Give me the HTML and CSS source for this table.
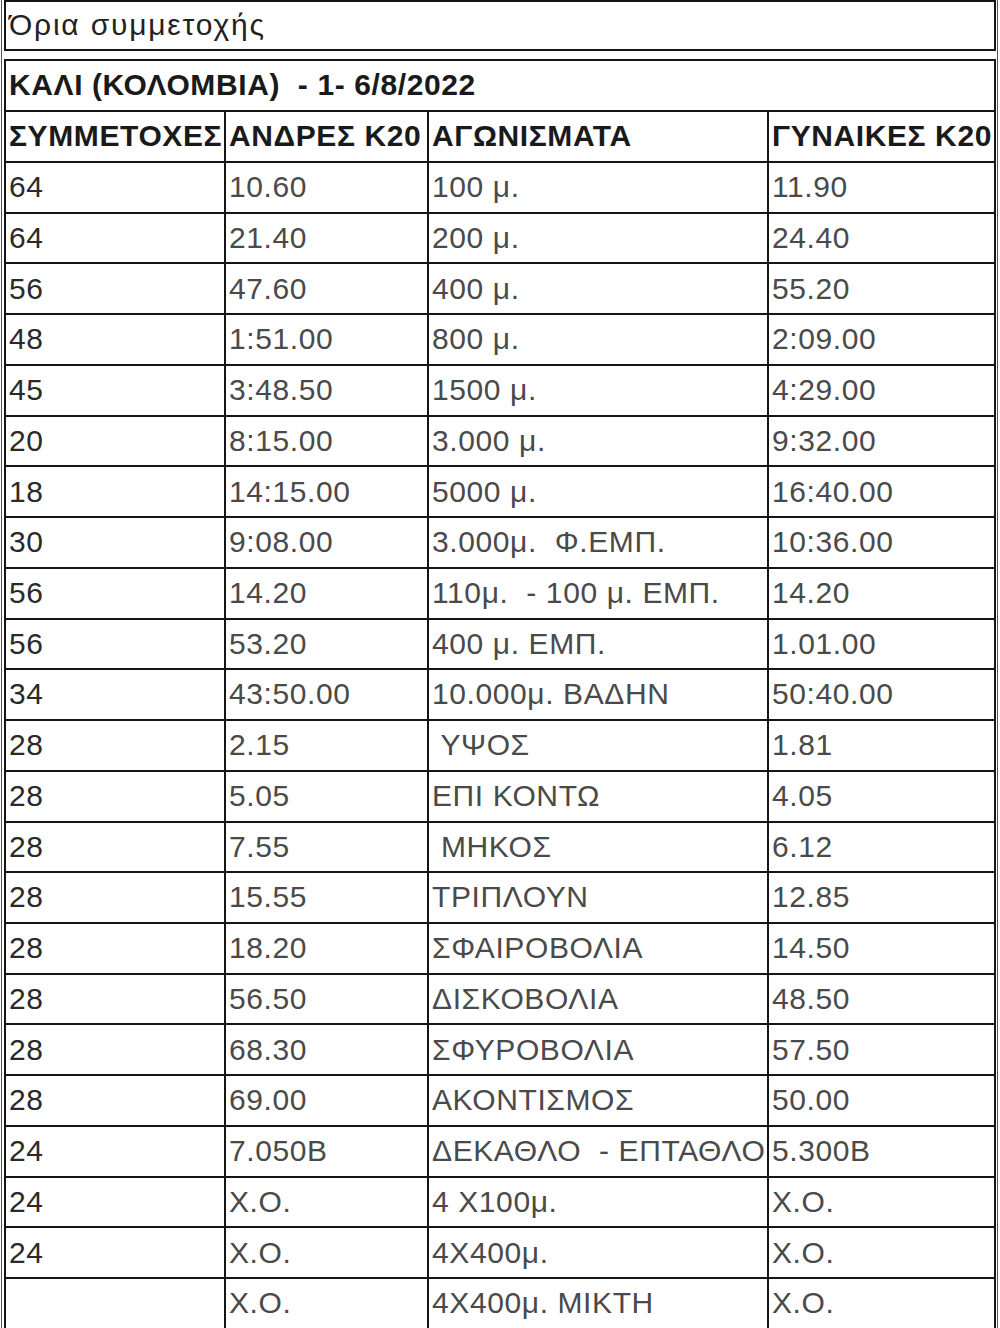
FILE: index.html
```html
<!DOCTYPE html>
<html lang="el">
<head>
<meta charset="utf-8">
<title>Όρια συμμετοχής</title>
<link rel="stylesheet" href="styles.css">
</head>
<body>
<div class="frame">
  <table class="title-table">
    <tr><td class="title">Όρια συμμετοχής</td></tr>
  </table>
  <table class="limits">
    <colgroup>
      <col class="c1"><col class="c2"><col class="c3"><col class="c4">
    </colgroup>
    <tr class="event"><th colspan="4">ΚΑΛΙ (ΚΟΛΟΜΒΙΑ)  - 1- 6/8/2022</th></tr>
    <tr class="head"><th>ΣΥΜΜΕΤΟΧΕΣ</th><th>ΑΝΔΡΕΣ Κ20</th><th>ΑΓΩΝΙΣΜΑΤΑ</th><th>ΓΥΝΑΙΚΕΣ Κ20</th></tr>
    <tr><td>64</td><td>10.60</td><td>100 μ.</td><td>11.90</td></tr>
    <tr><td>64</td><td>21.40</td><td>200 μ.</td><td>24.40</td></tr>
    <tr><td>56</td><td>47.60</td><td>400 μ.</td><td>55.20</td></tr>
    <tr><td>48</td><td>1:51.00</td><td>800 μ.</td><td>2:09.00</td></tr>
    <tr><td>45</td><td>3:48.50</td><td>1500 μ.</td><td>4:29.00</td></tr>
    <tr><td>20</td><td>8:15.00</td><td>3.000 μ.</td><td>9:32.00</td></tr>
    <tr><td>18</td><td>14:15.00</td><td>5000 μ.</td><td>16:40.00</td></tr>
    <tr><td>30</td><td>9:08.00</td><td>3.000μ.  Φ.ΕΜΠ.</td><td>10:36.00</td></tr>
    <tr><td>56</td><td>14.20</td><td>110μ.  - 100 μ. ΕΜΠ.</td><td>14.20</td></tr>
    <tr><td>56</td><td>53.20</td><td>400 μ. ΕΜΠ.</td><td>1.01.00</td></tr>
    <tr><td>34</td><td>43:50.00</td><td>10.000μ. ΒΑΔΗΝ</td><td>50:40.00</td></tr>
    <tr><td>28</td><td>2.15</td><td> ΥΨΟΣ</td><td>1.81</td></tr>
    <tr><td>28</td><td>5.05</td><td>ΕΠΙ ΚΟΝΤΩ</td><td>4.05</td></tr>
    <tr><td>28</td><td>7.55</td><td> ΜΗΚΟΣ</td><td>6.12</td></tr>
    <tr><td>28</td><td>15.55</td><td>ΤΡΙΠΛΟΥΝ</td><td>12.85</td></tr>
    <tr><td>28</td><td>18.20</td><td>ΣΦΑΙΡΟΒΟΛΙΑ</td><td>14.50</td></tr>
    <tr><td>28</td><td>56.50</td><td>ΔΙΣΚΟΒΟΛΙΑ</td><td>48.50</td></tr>
    <tr><td>28</td><td>68.30</td><td>ΣΦΥΡΟΒΟΛΙΑ</td><td>57.50</td></tr>
    <tr><td>28</td><td>69.00</td><td>ΑΚΟΝΤΙΣΜΟΣ</td><td>50.00</td></tr>
    <tr><td>24</td><td>7.050Β</td><td>ΔΕΚΑΘΛΟ  - ΕΠΤΑΘΛΟ</td><td>5.300Β</td></tr>
    <tr><td>24</td><td>Χ.Ο.</td><td>4 Χ100μ.</td><td>Χ.Ο.</td></tr>
    <tr><td>24</td><td>Χ.Ο.</td><td>4Χ400μ.</td><td>Χ.Ο.</td></tr>
    <tr><td></td><td>Χ.Ο.</td><td>4Χ400μ. ΜΙΚΤΗ</td><td>Χ.Ο.</td></tr>
  </table>
</div>
</body>
</html>
```

FILE: styles.css
```css
html, body {
  margin: 0;
  padding: 0;
  background: #ffffff;
}

body {
  font-family: "Liberation Sans", Arial, sans-serif;
  font-size: 30px;
  color: #333333;
}

.frame {
  margin-left: 1px;
  width: 997px;
  padding: 0 1px 0 2px;
  border-left: 1px solid #555555;
  border-right: 1px solid #555555;
  min-height: 1328px;
  box-sizing: border-box;
}

table {
  border-collapse: separate;
  border-spacing: 0;
  table-layout: fixed;
  width: 992px;
  border-left: 2px solid #151515;
  border-top: 2px solid #151515;
}

td, th {
  border-right: 2px solid #151515;
  border-bottom: 2px solid #151515;
  padding: 0 3px;
  white-space: pre;
  overflow: visible;
  text-align: left;
  vertical-align: middle;
  box-sizing: border-box;
  line-height: 1.15;
  letter-spacing: 0.6px;
}

.title-table {
  margin-bottom: 8px;
}

.title-table td {
  height: 49px;
  color: #222222;
  font-weight: normal;
  letter-spacing: 1.8px;
}

.c1 { width: 220px; }
.c2 { width: 203px; }
.c3 { width: 340px; }
.c4 { width: 227px; }

.limits th {
  font-weight: bold;
  color: #1a1a1a;
  height: 51px;
}

.limits td {
  height: 50.74px;
  color: #4a4a4a;
}

.limits td:first-child {
  color: #2a2a2a;
}
```
